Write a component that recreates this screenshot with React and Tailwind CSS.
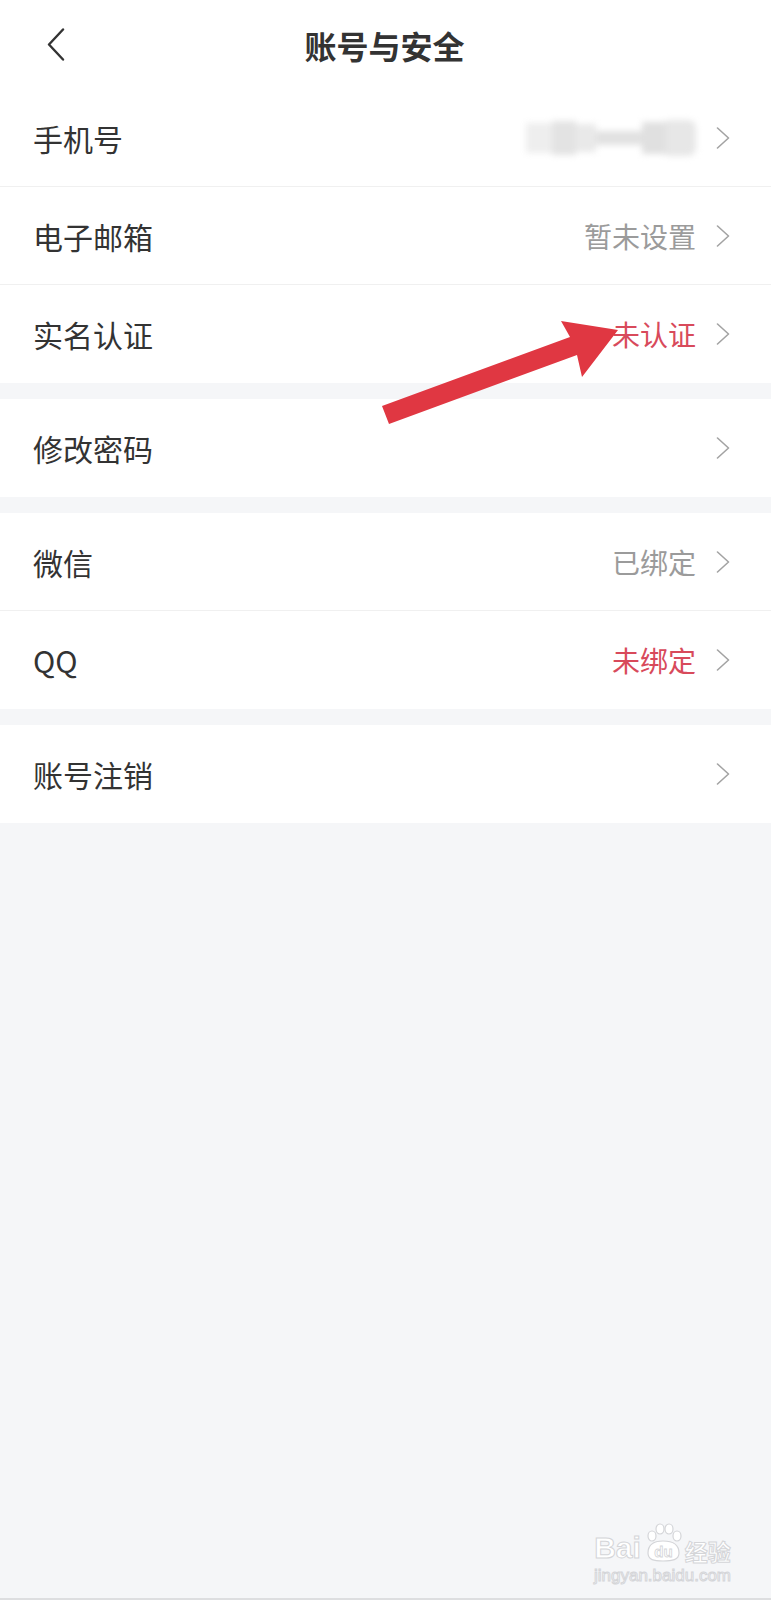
import React from "react";

const FONT = { fontFamily: '"Noto Sans CJK SC", "Noto Sans", sans-serif' };

// right chevron used by every row
const Chevron = () => (
  <svg width="14" height="22" viewBox="0 0 14 22" className="shrink-0">
    <path d="M1.5 1 L12.5 11 L1.5 21" fill="none" stroke="#a3a3a3" strokeWidth="1.6" strokeLinecap="round" strokeLinejoin="round" />
  </svg>
);

// the blurred phone number
const BlurredPhone = () => (
  <div className="flex h-[36px] w-[170px] items-center overflow-hidden rounded-r-[8px] blur-[3px]">
    <div className="h-[30px] w-[26px] bg-[#eeeeee]" />
    <div className="h-[34px] w-[24px] bg-[#e3e3e3]" />
    <div className="h-[28px] w-[20px] bg-[#e9e9e9]" />
    <div className="h-[14px] w-[46px] bg-[#e1e1e1]" />
    <div className="h-[32px] w-[24px] bg-[#e0e0e0]" />
    <div className="h-[36px] w-[30px] bg-[#e7e7e7]" />
  </div>
);

const Row = ({ label, value, tone, last, children }) => (
  <div
    className={`flex h-[98px] items-center bg-white pl-[33px] pr-[41px] ${
      last ? "" : "border-b border-[#f0f0f0]"
    }`}
  >
    <span className="flex-1 text-[30px] leading-none text-[#333333]">{label}</span>
    {children}
    {value && (
      <span
        className={`text-[28px] leading-none ${
          tone === "red" ? "text-[#d84a5b]" : "text-[#9b9b9b]"
        }`}
      >
        {value}
      </span>
    )}
    <div className="ml-[20px] flex items-center">
      <Chevron />
    </div>
  </div>
);

const Gap = () => <div className="h-[16px] bg-[#f5f6f8]" />;

const Watermark = () => (
  <div className="absolute bottom-[16px] right-[40px] flex flex-col items-center">
    <div className="flex items-end">
      <span className="text-[30px] font-bold leading-none text-white [-webkit-text-stroke:1px_#d4d5d8]" style={{ fontFamily: '"Liberation Sans", sans-serif' }}>
        Bai
      </span>
      <svg width="42" height="40" viewBox="0 0 42 40" className="mx-[1px]">
        <g fill="#ffffff" stroke="#d4d5d8" strokeWidth="1.2">
          <ellipse cx="10" cy="13" rx="4" ry="5" />
          <ellipse cx="18" cy="6" rx="4" ry="5" />
          <ellipse cx="27" cy="6" rx="4" ry="5" />
          <ellipse cx="35" cy="13" rx="4" ry="5" />
          <path d="M6 30 C6 20 14 18 21 18 C28 18 37 20 37 30 C37 37 30 38 21 38 C12 38 6 37 6 30 Z" />
        </g>
        <text x="21.5" y="34" textAnchor="middle" fontSize="15" fontWeight="700" fill="#ffffff" stroke="#d4d5d8" strokeWidth="0.8" fontFamily="Liberation Sans, sans-serif">
          du
        </text>
      </svg>
      <span className="text-[23px] font-bold leading-none text-white [-webkit-text-stroke:1px_#d4d5d8]" style={FONT}>
        经验
      </span>
    </div>
    <span className="mt-[4px] text-[17px] leading-none text-white [-webkit-text-stroke:1px_#d4d5d8]" style={{ fontFamily: '"Liberation Sans", sans-serif' }}>
      jingyan.baidu.com
    </span>
  </div>
);

export default function App() {
  return (
    <div className="relative min-h-[1600px] w-full bg-[#f5f6f8]" style={FONT}>
      {/* header */}
      <div className="relative flex h-[89px] items-center justify-center bg-white">
        <svg width="18" height="33" viewBox="0 0 18 33" className="absolute left-[47px] top-[28px]">
          <path d="M16 1.5 L2 16.5 L16 31.5" fill="none" stroke="#333333" strokeWidth="2.4" strokeLinecap="round" strokeLinejoin="round" />
        </svg>
        <h1 className="ml-[-2px] text-[32px] font-bold leading-none text-[#333333]">账号与安全</h1>
      </div>

      <div>
        <Row label="手机号">
          <BlurredPhone />
        </Row>
        <Row label="电子邮箱" value="暂未设置" />
        <Row label="实名认证" value="未认证" tone="red" last />
      </div>
      <Gap />
      <Row label="修改密码" last />
      <Gap />
      <div>
        <Row label="微信" value="已绑定" />
        <Row label="QQ" value="未绑定" tone="red" last />
      </div>
      <Gap />
      <Row label="账号注销" last />

      <div className="absolute bottom-0 left-0 h-[2px] w-full bg-[#dddee0]" />
      <Watermark />

      {/* red annotation arrow */}
      <svg className="pointer-events-none absolute left-0 top-0" width="771" height="500" viewBox="0 0 771 500">
        <polygon
          points="382,406 389,424 577,355 582,377 618,330 561,321 570,337"
          fill="#e03742"
        />
      </svg>
    </div>
  );
}
